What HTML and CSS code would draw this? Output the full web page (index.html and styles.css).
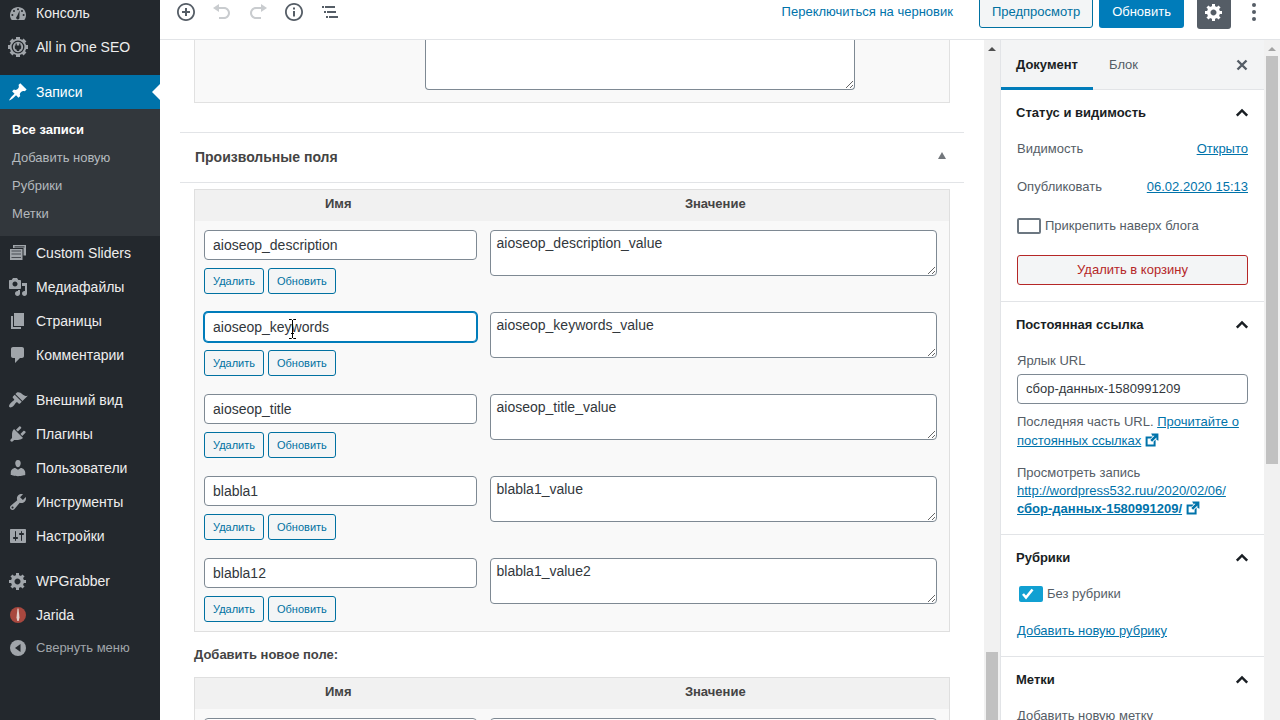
FILE: index.html
```html
<!DOCTYPE html>
<html lang="ru">
<head>
<meta charset="utf-8">
<title>Редактировать запись</title>
<link rel="stylesheet" href="styles.css">
</head>
<body>
<svg class="defs" aria-hidden="true">
  <symbol id="gear" viewBox="0 0 20 20"><path d="M18 12h-2.180c-.17.7-.44 1.350-.81 1.930l1.540 1.540-2.100 2.100-1.540-1.540c-.58.36-1.230.63-1.910.79V19H8v-2.180c-.68-.16-1.330-.43-1.910-.79l-1.540 1.540-2.120-2.120 1.540-1.540c-.36-.58-.63-1.230-.79-1.910H1V9.030h2.170c.16-.7.44-1.350.8-1.940L2.430 5.550l2.100-2.100 1.540 1.540c.58-.37 1.240-.64 1.930-.81V2h3v2.180c.68.16 1.330.43 1.910.79l1.540-1.540 2.120 2.120-1.540 1.540c.36.59.64 1.240.8 1.940H18V12zm-8.500 1.500c1.660 0 3-1.340 3-3s-1.340-3-3-3-3 1.340-3 3 1.340 3 3 3z"/></symbol>
  <symbol id="chevron" viewBox="0 0 24 24"><path d="M6.800 14.600L12 9.400l5.200 5.200" fill="none" stroke="currentColor" stroke-width="2.500"/></symbol>
  <symbol id="external" viewBox="0 0 20 20"><path d="M9 2h9v9l-2.500-1.200V6.900l-5.400 5.400-2.200-2.200 5.300-5.400H10.300zm3 13v-3l2.500-2.500V18H2V5.500h9L8.500 8h-4v7.500H12z"/></symbol>
</svg>

<nav class="menu">
  <ul class="menu-list">
    <li><a class="menu-item" href="#"><svg class="icon" viewBox="0 0 20 20"><path d="M3.760 17h12.480c1.100-1.370 1.760-3.110 1.760-5 0-4.420-3.580-8-8-8s-8 3.580-8 8c0 1.890.66 3.630 1.760 5z"/><g fill="#23282d"><circle cx="10" cy="6.300" r="1"/><circle cx="6" cy="8" r="1"/><circle cx="14" cy="8" r="1"/><circle cx="4.400" cy="12" r="1"/><circle cx="15.600" cy="12" r="1"/><path d="M11.600 7.600l-.2 6.400a1.700 1.700 0 1 1-2.400-.8z"/></g></svg>Консоль</a></li>
    <li><a class="menu-item" href="#"><svg class="icon" viewBox="0 0 20 20"><path d="M10 0v20M0 10h20M3 3l14 14M17 3L3 17" fill="none" stroke="currentColor" stroke-width="4"/><circle cx="10" cy="10" r="8.300"/><circle cx="10" cy="10" r="5.800" fill="none" stroke="#23282d" stroke-width="1.300"/><path fill="#23282d" d="M7.600 6.500h1.200v2h2.400v-2h1.200v2h.8v2.200c0 1-.8 1.900-2 2V14H8.800v-1.300c-1.200-.1-2-1-2-2V8.500h.8z"/></svg>All in One SEO</a></li>
    <li class="gap"><a class="menu-item current" href="#"><svg class="icon" viewBox="0 0 20 20"><path d="M10.440 3.020l1.820-1.820 6.360 6.350-1.830 1.820c-1.050-.68-2.480-.57-3.410.36l-.75.75c-.92.93-1.040 2.350-.35 3.410l-1.830 1.820-2.410-2.410-2.800 2.790c-.42.42-3.380 2.710-3.800 2.290s1.860-3.390 2.280-3.810l2.790-2.790L4.100 9.360l1.830-1.820c1.050.69 2.480.57 3.400-.36l.75-.75c.93-.92 1.050-2.350.36-3.410z"/></svg>Записи</a>
      <ul class="submenu">
        <li><a class="active" href="#">Все записи</a></li>
        <li><a href="#">Добавить новую</a></li>
        <li><a href="#">Рубрики</a></li>
        <li><a href="#">Метки</a></li>
      </ul>
    </li>
    <li><a class="menu-item" href="#"><svg class="icon" viewBox="0 0 20 20"><path d="M5 2h13v10.500h-2.500V5H5z"/><path fill="#23282d" d="M6.500 3.400h10v1H6.500z"/><path d="M2 6h12.500v11H2z"/><path fill="#23282d" opacity=".7" d="M3.500 7.500h9.500v1H3.500zM3.500 10.500h9.500v1H3.500zM3.500 14h9.500v1H3.500z"/></svg>Custom Sliders</a></li>
    <li><a class="menu-item" href="#"><svg class="icon" viewBox="0 0 20 20"><path d="M13 11V4c0-.55-.45-1-1-1h-1.670L9 1H5L3.670 3H2c-.55 0-1 .45-1 1v7c0 .55.45 1 1 1h10c.55 0 1-.45 1-1zM7 4.500c1.380 0 2.500 1.120 2.500 2.500S8.380 9.500 7 9.500 4.500 8.380 4.500 7 5.620 4.500 7 4.500zM14 6h5v10.500c0 1.380-1.120 2.500-2.500 2.500S14 17.880 14 16.500s1.120-2.500 2.500-2.500c.17 0 .34.02.5.05V9h-3V6zm-4 8.050V13h2v3.500c0 1.380-1.120 2.500-2.500 2.500S7 17.880 7 16.500 8.120 14 9.500 14c.17 0 .34.02.5.05z"/></svg>Медиафайлы</a></li>
    <li><a class="menu-item" href="#"><svg class="icon" viewBox="0 0 20 20"><path d="M6 15V2h10v13H6zm-1 1h8v2H3V5h2v11z"/></svg>Страницы</a></li>
    <li><a class="menu-item" href="#"><svg class="icon" viewBox="0 0 20 20"><path d="M5 2h9c1.100 0 2 .9 2 2v7c0 1.100-.9 2-2 2h-2l-5 5v-5H5c-1.100 0-2-.9-2-2V4c0-1.100.9-2 2-2z"/></svg>Комментарии</a></li>
    <li class="gap"><a class="menu-item" href="#"><svg class="icon" viewBox="0 0 20 20"><path d="M14.480 11.060L7.410 3.990l1.500-1.500c.5-.56 2.300-.47 3.510.32 1.210.8 1.430 1.280 2.910 2.100 1.180.64 2.450 1.260 4.450.85zm-.71.71L6.700 4.700 4.930 6.470c-.39.39-.39 1.020 0 1.410l1.060 1.060c.39.39.39 1.030 0 1.420-.6.6-1.430 1.110-2.210 1.690-.35.26-.7.53-1.010.84C1.430 14.230.4 16.080 1.400 17.070c.99 1 2.840-.03 4.180-1.360.31-.31.58-.66.85-1.020.57-.78 1.080-1.610 1.690-2.210.39-.39 1.020-.39 1.410 0l1.060 1.060c.39.39 1.020.39 1.410 0z"/></svg>Внешний вид</a></li>
    <li><a class="menu-item" href="#"><svg class="icon" viewBox="0 0 20 20"><path d="M13.110 4.360L9.870 7.600 8 5.730l3.240-3.240c.35-.34 1.050-.2 1.560.32.52.51.66 1.210.31 1.550zm-8 1.770l.91-1.120 9.010 9.010-1.190.84c-.71.71-2.630 1.160-3.820 1.160H6.140L4.900 17.260c-.59.59-1.540.59-2.120 0-.59-.58-.59-1.530 0-2.120l1.240-1.240v-3.880c0-1.130.4-3.190 1.090-3.890zm7.260 3.970l3.240-3.240c.34-.35 1.040-.21 1.550.31.52.51.66 1.210.31 1.550l-3.240 3.250z"/></svg>Плагины</a></li>
    <li><a class="menu-item" href="#"><svg class="icon" viewBox="0 0 20 20"><path d="M10 9.250c-2.270 0-2.730-3.440-2.730-3.440C7 4.020 7.820 2 9.970 2c2.160 0 2.980 2.020 2.710 3.810 0 0-.41 3.440-2.680 3.440zm0 2.570L12.720 10c2.390 0 4.520 2.330 4.520 4.530v2.490s-3.650 1.130-7.240 1.130c-3.650 0-7.240-1.130-7.240-1.130v-2.490c0-2.250 1.940-4.480 4.470-4.480z"/></svg>Пользователи</a></li>
    <li><a class="menu-item" href="#"><svg class="icon" viewBox="0 0 20 20"><path d="M16.680 9.770c-1.340 1.340-3.300 1.670-4.950.99l-5.410 6.520c-.99.99-2.590.99-3.580 0s-.99-2.590 0-3.570l6.520-5.420c-.68-1.650-.35-3.610.99-4.950 1.280-1.280 3.120-1.620 4.720-1.060l-2.890 2.890 2.820 2.820 2.860-2.870c.53 1.580.18 3.390-1.080 4.650zM3.810 16.210c.4.39 1.040.39 1.430 0 .4-.4.4-1.040 0-1.430-.39-.4-1.030-.4-1.430 0-.39.39-.39 1.030 0 1.430z"/></svg>Инструменты</a></li>
    <li><a class="menu-item" href="#"><svg class="icon" viewBox="0 0 20 20"><path d="M18 16V4c0-.55-.45-1-1-1H3c-.55 0-1 .45-1 1v12c0 .55.45 1 1 1h14c.55 0 1-.45 1-1zM8 11h1c.55 0 1 .45 1 1s-.45 1-1 1H8v1.500c0 .28-.22.5-.5.5s-.5-.22-.5-.5V13H6c-.55 0-1-.45-1-1s.45-1 1-1h1V5.500c0-.28.22-.5.5-.5s.5.22.5.5V11zm5-2h-1c-.55 0-1-.45-1-1s.45-1 1-1h1V5.500c0-.28.22-.5.5-.5s.5.22.5.5V7h1c.55 0 1 .45 1 1s-.45 1-1 1h-1v5.500c0 .28-.22.5-.5.5s-.5-.22-.5-.5V9z"/></svg>Настройки</a></li>
    <li class="gap"><a class="menu-item" href="#"><svg class="icon"><use href="#gear"/></svg>WPGrabber</a></li>
    <li><a class="menu-item" href="#"><svg class="icon" viewBox="0 0 20 20"><circle cx="10" cy="10" r="8" fill="#a8483f"/><path fill="#e3cfcb" d="M9.500 3.500h1l1 9-.8 3.500H9.300l-.8-3.500z"/></svg>Jarida</a></li>
    <li><button class="menu-item collapse" type="button"><svg class="icon" viewBox="0 0 20 20"><circle cx="10" cy="10" r="8"/><path fill="#23282d" d="M12.500 6v8L7 10z"/></svg>Свернуть меню</button></li>
  </ul>
</nav>

<div class="editor">
  <header class="topbar">
    <div class="tools">
      <button class="tool" type="button" aria-label="Добавить блок"><svg class="icon" viewBox="0 0 20 20"><path d="M10 1c-5 0-9 4-9 9s4 9 9 9 9-4 9-9-4-9-9-9zm0 16.200c-4 0-7.200-3.200-7.200-7.200S6 2.800 10 2.800s7.200 3.200 7.200 7.200-3.200 7.200-7.200 7.200zM11 6H9v3H6v2h3v3h2v-3h3V9h-3V6z"/></svg></button>
      <button class="tool" type="button" aria-label="Отменить" disabled><svg class="icon" viewBox="0 0 20 20"><path d="M12 5H7V2L1 6l6 4V7h5c2.200 0 4 1.800 4 4s-1.800 4-4 4H7v2h5c3.300 0 6-2.700 6-6s-2.700-6-6-6z"/></svg></button>
      <button class="tool" type="button" aria-label="Повторить" disabled><svg class="icon" viewBox="0 0 20 20"><path d="M8 5h5V2l6 4-6 4V7H8c-2.200 0-4 1.800-4 4s1.800 4 4 4h5v2H8c-3.300 0-6-2.700-6-6s2.700-6 6-6z"/></svg></button>
      <button class="tool" type="button" aria-label="Структура содержимого"><svg class="icon" viewBox="0 0 20 20"><path d="M10 1c-5 0-9 4-9 9s4 9 9 9 9-4 9-9-4-9-9-9zm0 16.200c-4 0-7.200-3.200-7.200-7.200S6 2.800 10 2.800s7.200 3.200 7.200 7.200-3.200 7.200-7.200 7.200zM11 9H9v5.500h2V9zm0-3.500H9v2h2v-2z"/></svg></button>
      <button class="tool" type="button" aria-label="Навигация по блокам"><svg class="icon" viewBox="0 0 20 20"><path d="M2 4h2v2H2zM5 4h10v2H5zM4 9h2v2H4zM7 9h9v2H7zM6 14h2v2H6zM9 14h9v2H9z"/></svg></button>
    </div>
    <div class="actions">
      <button class="draft" type="button">Переключиться на черновик</button>
      <button class="btn preview" type="button">Предпросмотр</button>
      <button class="btn update" type="button">Обновить</button>
      <button class="settings" type="button" aria-label="Настройки"><svg class="icon"><use href="#gear"/></svg></button>
      <button class="more" type="button" aria-label="Ещё"><svg class="icon" viewBox="0 0 20 20"><circle cx="10" cy="3" r="2"/><circle cx="10" cy="10" r="2"/><circle cx="10" cy="17" r="2"/></svg></button>
    </div>
  </header>

  <div class="work">
    <main class="canvas">
      <section class="box-tail"><textarea class="area tail-area" aria-label="Текст"></textarea></section>
      <section class="metabox">
        <h2 class="metabox-title"><span>Произвольные поля</span><button class="toggle" type="button" aria-label="Свернуть"></button></h2>
        <div class="metabox-body">
          <table class="fields">
            <thead><tr><th class="col-name">Имя</th><th>Значение</th></tr></thead>
            <tbody>
              <tr><td><input class="text" aria-label="Имя" value="aioseop_description"><div class="row-actions"><button class="small" type="button">Удалить</button><button class="small" type="button">Обновить</button></div></td><td><textarea class="area" aria-label="Значение">aioseop_description_value</textarea></td></tr>
              <tr><td><div class="pointed"><input class="text focused" aria-label="Имя" value="aioseop_keywords"><svg class="ibeam" viewBox="0 0 9 20"><path d="M1 .5h2.500l1 1 1-1H8M1 19.500h2.500l1-1 1 1H8M4.500 1v18M3 14.500h3" fill="none" stroke="#000"/></svg></div><div class="row-actions"><button class="small" type="button">Удалить</button><button class="small" type="button">Обновить</button></div></td><td><textarea class="area" aria-label="Значение">aioseop_keywords_value</textarea></td></tr>
              <tr><td><input class="text" aria-label="Имя" value="aioseop_title"><div class="row-actions"><button class="small" type="button">Удалить</button><button class="small" type="button">Обновить</button></div></td><td><textarea class="area" aria-label="Значение">aioseop_title_value</textarea></td></tr>
              <tr><td><input class="text" aria-label="Имя" value="blabla1"><div class="row-actions"><button class="small" type="button">Удалить</button><button class="small" type="button">Обновить</button></div></td><td><textarea class="area" aria-label="Значение">blabla1_value</textarea></td></tr>
              <tr><td><input class="text" aria-label="Имя" value="blabla12"><div class="row-actions"><button class="small" type="button">Удалить</button><button class="small" type="button">Обновить</button></div></td><td><textarea class="area" aria-label="Значение">blabla1_value2</textarea></td></tr>
            </tbody>
          </table>
          <p class="add-label">Добавить новое поле:</p>
          <table class="fields">
            <thead><tr><th class="col-name">Имя</th><th>Значение</th></tr></thead>
            <tbody><tr><td><input class="text" aria-label="Имя"></td><td><textarea class="area" aria-label="Значение"></textarea></td></tr></tbody>
          </table>
        </div>
      </section>
    </main>
    <div class="scroll scroll-main"><i class="up"></i><i class="thumb"></i></div>

    <aside class="side">
      <div class="tabs">
        <button class="tab selected" type="button">Документ</button>
        <button class="tab" type="button">Блок</button>
        <button class="close" type="button" aria-label="Закрыть"><svg viewBox="0 0 12 12"><path d="M1.500 1.500l9 9m0-9l-9 9" fill="none" stroke="currentColor" stroke-width="2.400"/></svg></button>
      </div>
      <section class="panel">
        <h2><button class="panel-title" type="button">Статус и видимость<svg class="chev"><use href="#chevron"/></svg></button></h2>
        <div class="panel-body">
          <div class="pair"><span>Видимость</span><a href="#">Открыто</a></div>
          <div class="pair"><span>Опубликовать</span><a href="#">06.02.2020 15:13</a></div>
          <label class="check"><input type="checkbox">Прикрепить наверх блога</label>
          <button class="trash" type="button">Удалить в корзину</button>
        </div>
      </section>
      <section class="panel">
        <h2><button class="panel-title" type="button">Постоянная ссылка<svg class="chev"><use href="#chevron"/></svg></button></h2>
        <div class="panel-body">
          <label class="field-label" for="slug">Ярлык URL</label>
          <input class="text slug" id="slug" value="сбор-данных-1580991209">
          <p class="help">Последняя часть URL. <a href="#">Прочитайте о постоянных ссылках</a><svg class="ext"><use href="#external"/></svg></p>
          <p>Просмотреть запись<br><a href="#">http://wordpress532.ruu/2020/02/06/<br><b>сбор-данных-1580991209/</b></a><svg class="ext"><use href="#external"/></svg></p>
        </div>
      </section>
      <section class="panel">
        <h2><button class="panel-title" type="button">Рубрики<svg class="chev"><use href="#chevron"/></svg></button></h2>
        <div class="panel-body">
          <label class="check category"><input type="checkbox" checked>Без рубрики</label>
          <a href="#">Добавить новую рубрику</a>
        </div>
      </section>
      <section class="panel">
        <h2><button class="panel-title" type="button">Метки<svg class="chev"><use href="#chevron"/></svg></button></h2>
        <div class="panel-body"><label class="field-label" for="tag">Добавить новую метку</label><input class="text" id="tag"></div>
      </section>
    </aside>
    <div class="scroll scroll-side"><i class="up"></i><i class="thumb"></i></div>
  </div>
</div>
</body>
</html>
```
FILE: styles.css
```css
* { box-sizing: border-box; }
body {
  margin: 0;
  height: 100vh;
  display: flex;
  overflow: hidden;
  background: #fff;
  color: #444;
  font: 13px/18px "Liberation Sans", Arial, sans-serif;
}
button, input, textarea { font: inherit; color: inherit; margin: 0; }
button { border: 0; padding: 0; background: none; }
h2, p, ul { margin: 0; padding: 0; font-size: inherit; }
ul { list-style: none; }
a { color: #0073aa; }
svg { fill: currentColor; }
.defs { display: none; }
.icon { width: 20px; height: 20px; flex: none; }

/* Admin menu */
.menu { width: 160px; flex: none; background: #23282d; overflow: hidden; }
.menu-list { margin-top: -4px; }
.menu-item {
  display: flex;
  align-items: center;
  gap: 8px;
  width: 100%;
  height: 34px;
  padding: 0 8px;
  font-size: 14px;
  color: #eee;
  text-decoration: none;
  white-space: nowrap;
}
.menu-item .icon { color: #a0a5aa; }
.gap { margin-top: 11px; }
.current { position: relative; background: #0073aa; color: #fff; }
.current .icon { color: #fff; }
.current::after {
  content: "";
  position: absolute;
  right: 0;
  top: 9px;
  border: 8px solid transparent;
  border-left: 0;
  border-right-color: #fff;
}
.submenu { padding: 7px 0 8px; background: #32373c; }
.submenu a {
  display: block;
  padding: 0 12px;
  line-height: 28px;
  color: #b4b9be;
  text-decoration: none;
}
.submenu .active { color: #fff; font-weight: bold; }
.collapse { height: 32px; font-size: 13px; color: #a0a5aa; }

/* Editor frame */
.editor { flex: 1; min-width: 0; display: flex; flex-direction: column; }
.topbar {
  height: 56px;
  margin-top: -16px;
  flex: none;
  display: flex;
  justify-content: space-between;
  align-items: center;
  padding: 0 8px;
  border-bottom: 1px solid #e2e4e7;
}
.tools, .actions { display: flex; align-items: center; }
.tool { width: 36px; height: 36px; display: grid; place-items: center; color: #555d66; }
.tool:disabled { color: #c9cccf; }
.draft { margin-right: 26px; color: #0073aa; }
.btn { height: 33px; padding: 0 12px; border-radius: 3px; }
.preview { border: 1px solid #0071a1; background: #f3f5f6; color: #0071a1; }
.update { margin: 0 13px 0 6px; padding: 0 13px; background: #007cba; color: #fff; }
.settings {
  width: 34px;
  height: 34px;
  display: grid;
  place-items: center;
  border-radius: 3px;
  background: #555d66;
  color: #fff;
}
.more { width: 36px; margin-left: 5px; display: grid; place-items: center; color: #555d66; }
.work { flex: 1; min-height: 0; display: flex; }
.canvas { flex: 1; min-width: 0; overflow: hidden; padding: 0 20px; }

/* Meta boxes */
.box-tail {
  height: 63px;
  margin: 0 14px 29px;
  padding: 0 94px 12px 230px;
  border: 1px solid #e1e1e1;
  border-top: 0;
  background: #f9f9f9;
}
.text, .area {
  display: block;
  width: 100%;
  border: 1px solid #7e8993;
  border-radius: 4px;
  background: #fff;
  color: #32373c;
  font-size: 14px;
  outline: 0;
}
.text { height: 30px; padding: 0 8px; }
.area { height: 46px; padding: 2px 6px; line-height: 20px; resize: vertical; overflow: hidden; }
.tail-area { height: 50px; border-top: 0; border-radius: 0 0 4px 4px; }
.metabox { border-top: 1px solid #e2e4e7; }
.metabox-title {
  height: 50px;
  display: flex;
  justify-content: space-between;
  align-items: center;
  padding: 0 18px 2px 15px;
  border-bottom: 1px solid #e2e4e7;
  font-size: 14px;
}
.toggle { border: 4px solid transparent; border-top: 0; border-bottom: 7px solid #72777c; margin-bottom: 2px; }
.metabox-body { padding: 6px 14px; }
.fields {
  width: 100%;
  table-layout: fixed;
  border: 1px solid #dfdfdf;
  border-spacing: 0;
  background: #f9f9f9;
}
.fields th { height: 31px; padding: 0 0 3px; background: #f1f1f1; }
.col-name { width: 38%; }
.fields td { height: 82px; padding: 9px 5px 9px 9px; vertical-align: top; }
.fields td + td { padding: 9px 12px 9px 8px; }
.row-actions { display: flex; gap: 4px; margin-top: 8px; }
.small {
  height: 26px;
  padding: 0 8px;
  border: 1px solid #0071a1;
  border-radius: 3px;
  background: #f3f5f6;
  color: #0071a1;
  font-size: 11px;
}
.focused { border-color: #007cba; box-shadow: 0 0 0 1px #007cba; }
.pointed { position: relative; }
.ibeam { position: absolute; left: 84px; top: 7px; width: 9px; height: 20px; }
.add-label { margin: 14px 0 13px; font-weight: bold; }

/* Scrollbars */
.scroll { width: 16px; flex: none; background: #f1f1f1; display: flex; flex-direction: column; align-items: center; }
.up { margin: 7px 0 5px; border: 4px solid transparent; border-top: 0; border-bottom-color: #505050; }
.thumb { width: 12px; background: #c1c1c1; }
.scroll-main .thumb { height: 10%; margin-top: auto; }
.scroll-side .up { border-bottom-color: #a3a3a3; }
.scroll-side .thumb { height: 60%; }

/* Document settings */
.side { width: 264px; flex: none; overflow: hidden; border-left: 1px solid #e2e4e7; color: #555d66; }
.tabs { height: 50px; display: flex; background: #f3f4f5; border-bottom: 1px solid #e2e4e7; }
.tab { height: 50px; padding: 0 16px; color: #555d66; }
.selected { padding: 3px 15px 0; border-bottom: 3px solid #007cba; font-weight: bold; color: #191e23; }
.close { margin-left: auto; padding: 0 16px; display: grid; place-items: center; }
.close svg { width: 12px; height: 12px; }
.panel { border-bottom: 1px solid #e2e4e7; }
.panel-title {
  width: 100%;
  height: 46px;
  display: flex;
  justify-content: space-between;
  align-items: center;
  padding: 0 10px 0 15px;
  font-weight: bold;
  color: #191e23;
}
.chev { width: 24px; height: 24px; }
.panel-body { padding: 0 16px 16px; }
.pair { display: flex; justify-content: space-between; line-height: 26px; margin-bottom: 12px; }
.check { display: flex; align-items: center; gap: 4px; height: 28px; }
.check input {
  appearance: none;
  width: 24px;
  height: 16px;
  margin: 0;
  border: 2px solid #6c7781;
  border-radius: 2px;
  background: #fff;
}
.check input:checked {
  border-color: #11a0d2;
  background: #11a0d2 url("data:image/svg+xml,%3Csvg xmlns='http://www.w3.org/2000/svg' viewBox='0 0 12 12'%3E%3Cpath d='M1 6l3 3.500 6.500-8' fill='none' stroke='white' stroke-width='2.600'/%3E%3C/svg%3E") 1px 0 / 12px 12px no-repeat;
}
.category { height: 26px; margin: 0 0 15px 2px; }
.trash {
  width: 100%;
  height: 30px;
  margin-top: 15px;
  border: 1px solid #b52727;
  border-radius: 3px;
  background: #f3f5f6;
  color: #b52727;
}
.field-label { display: block; line-height: 26px; }
.slug { padding-bottom: 2px; font-size: 13px; }
.help { margin: 8px 0 14px; line-height: 19px; }
.ext { width: 16px; height: 16px; margin-left: 3px; color: #0073aa; vertical-align: -3px; }
```
